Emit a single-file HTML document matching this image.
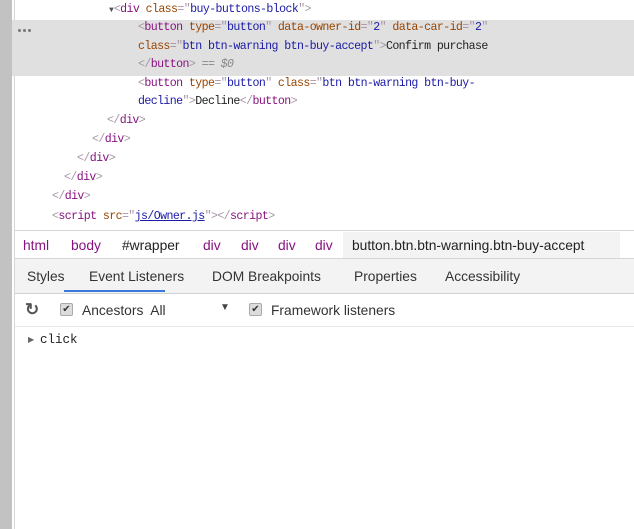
<!DOCTYPE html>
<html><head><meta charset="utf-8"><style>
body{margin:0;width:634px;height:529px;position:relative;overflow:hidden;background:#fff;font-family:"Liberation Sans",sans-serif}
.lb{position:absolute;left:0;top:0;width:12px;height:529px;background:#c2c2c2}
.lb2{position:absolute;left:14px;top:0;width:1px;height:529px;background:#d6d6d6}
.code{position:absolute;left:15px;top:0;right:0;font-family:"Liberation Mono",monospace;font-size:11.6px;letter-spacing:-0.6px;color:#222}
.l{position:absolute;white-space:pre;line-height:18.8px}
.t{color:#881280}.a{color:#994500}.v{color:#1a1aa6}.b{color:#a894a6}.u{text-decoration:underline}
.sel{position:absolute;left:12px;top:20px;width:622px;height:56px;background:#e0e0e0}
.hr{position:absolute;left:15px;right:0;height:1px;background:#d6d6d6}
.s{position:absolute;font-size:13.8px;color:#333;white-space:pre}
.p{color:#881280}
.cb{position:absolute;width:11px;height:11px;background:#dcdcdc;border:1px solid #aaa;border-radius:2px;font-size:10px;line-height:11px;text-align:center;color:#333}
.dot{position:absolute;top:29px;width:3px;height:3px;border-radius:50%;background:#777}
</style></head><body>
<div class="lb"></div><div class="lb2"></div>
<div class="sel"></div>
<div class="dot" style="left:18px"></div><div class="dot" style="left:23px"></div><div class="dot" style="left:28px"></div>
<div class="code">
<div class="l" style="left:94px;top:1px"><span style="font-size:8px;color:#555;letter-spacing:0">▼</span><span class="b">&lt;</span><span class="t">div</span> <span class="a">class</span><span class="b">="</span><span class="v">buy-buttons-block</span><span class="b">"&gt;</span></div>
<div class="l" style="left:123px;top:19px"><span class="b">&lt;</span><span class="t">button</span> <span class="a">type</span><span class="b">="</span><span class="v">button</span><span class="b">"</span> <span class="a">data-owner-id</span><span class="b">="</span><span class="v">2</span><span class="b">"</span> <span class="a">data-car-id</span><span class="b">="</span><span class="v">2</span><span class="b">"</span></div>
<div class="l" style="left:123px;top:38px"><span class="a">class</span><span class="b">="</span><span class="v">btn btn-warning btn-buy-accept</span><span class="b">"&gt;</span>Confirm purchase</div>
<div class="l" style="left:123px;top:56px"><span class="b">&lt;/</span><span class="t">button</span><span class="b">&gt;</span> <span style="color:#888">== <i>$0</i></span></div>
<div class="l" style="left:123px;top:75px"><span class="b">&lt;</span><span class="t">button</span> <span class="a">type</span><span class="b">="</span><span class="v">button</span><span class="b">"</span> <span class="a">class</span><span class="b">="</span><span class="v">btn btn-warning btn-buy-</span></div>
<div class="l" style="left:123px;top:93px"><span class="v">decline</span><span class="b">"&gt;</span>Decline<span class="b">&lt;/</span><span class="t">button</span><span class="b">&gt;</span></div>
<div class="l" style="left:92px;top:112px"><span class="b">&lt;/</span><span class="t">div</span><span class="b">&gt;</span></div>
<div class="l" style="left:77px;top:131px"><span class="b">&lt;/</span><span class="t">div</span><span class="b">&gt;</span></div>
<div class="l" style="left:62px;top:150px"><span class="b">&lt;/</span><span class="t">div</span><span class="b">&gt;</span></div>
<div class="l" style="left:49px;top:169px"><span class="b">&lt;/</span><span class="t">div</span><span class="b">&gt;</span></div>
<div class="l" style="left:37px;top:188px"><span class="b">&lt;/</span><span class="t">div</span><span class="b">&gt;</span></div>
<div class="l" style="left:37px;top:208px"><span class="b">&lt;</span><span class="t">script</span> <span class="a">src</span><span class="b">="</span><span class="v u">js/Owner.js</span><span class="b">"&gt;&lt;/</span><span class="t">script</span><span class="b">&gt;</span></div>
</div>
<div class="hr" style="top:230px"></div>
<div style="position:absolute;left:343px;top:232px;width:277px;height:26px;background:#f3f3f3"></div>
<div class="s p" style="left:23px;top:238px">html</div>
<div class="s p" style="left:71px;top:238px">body</div>
<div class="s" style="left:122px;top:238px;color:#222">#wrapper</div>
<div class="s p" style="left:203px;top:238px">div</div>
<div class="s p" style="left:241px;top:238px">div</div>
<div class="s p" style="left:278px;top:238px">div</div>
<div class="s p" style="left:315px;top:238px">div</div>
<div class="s" style="left:352px;top:238px;color:#222">button.btn.btn-warning.btn-buy-accept</div>
<div style="position:absolute;left:15px;right:0;top:258px;height:34px;background:#f3f3f3;border-top:1px solid #d6d6d6;border-bottom:1px solid #d0d0d0"></div>
<div style="position:absolute;left:64px;top:290px;width:101px;height:2px;background:#3879d9"></div>
<div class="s" style="left:27px;top:269px">Styles</div>
<div class="s" style="left:89px;top:269px">Event Listeners</div>
<div class="s" style="left:212px;top:269px">DOM Breakpoints</div>
<div class="s" style="left:354px;top:269px">Properties</div>
<div class="s" style="left:445px;top:269px">Accessibility</div>
<div class="hr" style="top:326px;background:#e6e6e6"></div>
<div class="s" style="left:25px;top:300px;font-size:17px;font-weight:bold;color:#555">↻</div>
<div class="cb" style="left:60px;top:303px">✔</div>
<div class="s" style="left:82px;top:303px">Ancestors  All</div>
<div class="s" style="left:220px;top:302px;font-size:10px;color:#444">▼</div>
<div class="cb" style="left:249px;top:303px">✔</div>
<div class="s" style="left:271px;top:303px">Framework listeners</div>
<div class="s" style="left:28px;top:335px;font-size:8px;color:#666">▶</div>
<div class="s" style="left:40px;top:333px;font-family:'Liberation Mono',monospace;font-size:12.5px;color:#222">click</div>
</body></html>
